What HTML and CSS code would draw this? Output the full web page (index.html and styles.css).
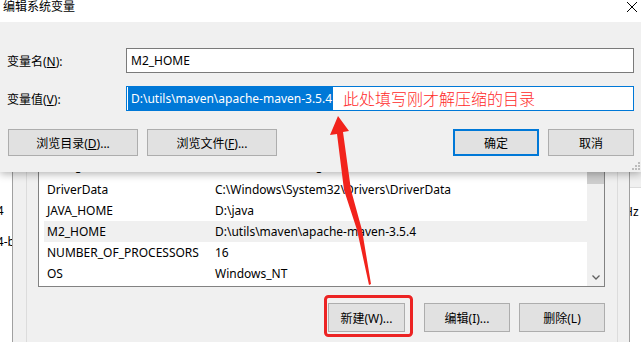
FILE: index.html
```html
<!DOCTYPE html>
<html>
<head>
    <title>编辑系统变量</title>
    <link rel="stylesheet" href="styles.css">
</head>
<body>
    <div class="desktop">
        <div class="envwin">
            <div class="edge-left">
                <div class="edge-line">64</div>
                <div class="edge-line">64-bit</div>
            </div>
            <div class="frame">
                <div class="inner">
                    <div class="varlist">
                        <div class="rows">
                            <div class="row peek"><span>configsetroot</span><span>C:\Windows\ConfigSetRoot</span></div>
                            <div class="row"><span>DriverData</span><span>C:\Windows\System32\Drivers\DriverData</span></div>
                            <div class="row"><span>JAVA_HOME</span><span>D:\java</span></div>
                            <div class="row hover"><span>M2_HOME</span><span>D:\utils\maven\apache-maven-3.5.4</span></div>
                            <div class="row"><span>NUMBER_OF_PROCESSORS</span><span>16</span></div>
                            <div class="row"><span>OS</span><span>Windows_NT</span></div>
                        </div>
                        <div class="scrollbar">
                            <div class="thumb"></div>
                            <div class="track"></div>
                            <div class="arrow-down">
                                <svg width="8" height="5" viewBox="0 0 8 5"><path d="M0.5 0.5 L4 4 L7.5 0.5" fill="none" stroke="#606060" stroke-width="1.3"/></svg>
                            </div>
                        </div>
                    </div>
                    <div class="list-buttons">
                        <button class="btn btn-new">新建(W)...</button>
                        <button class="btn btn-list">编辑(I)...</button>
                        <button class="btn btn-list">删除(L)</button>
                    </div>
                </div>
            </div>
            <div class="edge-right">
                <div class="edge-right-top"></div>
                <div class="edge-line hz">Hz</div>
            </div>
        </div>

        <div class="dialog">
            <div class="titlebar">
                <span class="title">编辑系统变量</span>
                <svg class="close" width="10" height="10" viewBox="0 0 10 10"><path d="M0 0 L10 10 M10 0 L0 10" stroke="#000" stroke-width="1"/></svg>
            </div>
            <div class="dialog-body">
                <div class="fields">
                    <label>变量名(<u>N</u>):</label>
                    <div class="field">M2_HOME</div>
                    <label>变量值(<u>V</u>):</label>
                    <div class="field focused"><span class="sel">D:\utils\maven\apache-maven-3.5.4</span><span class="note">此处填写刚才解压缩的目录</span></div>
                </div>
                <div class="dialog-buttons">
                    <button class="btn btn-wide">浏览目录(<u>D</u>)...</button>
                    <button class="btn btn-wide">浏览文件(<u>F</u>)...</button>
                    <button class="btn btn-ok">确定</button>
                    <button class="btn btn-cancel">取消</button>
                </div>
            </div>
            <svg class="grip" width="8" height="8" viewBox="0 0 8 8">
                <rect x="6" y="0" width="2" height="2" fill="#bcbcbc"/>
                <rect x="3" y="3" width="2" height="2" fill="#bcbcbc"/>
                <rect x="6" y="3" width="2" height="2" fill="#bcbcbc"/>
                <rect x="0" y="6" width="2" height="2" fill="#bcbcbc"/>
                <rect x="3" y="6" width="2" height="2" fill="#bcbcbc"/>
                <rect x="6" y="6" width="2" height="2" fill="#bcbcbc"/>
            </svg>
        </div>

        <!-- red annotation: arrow and box around the new button -->
        <svg class="marks" width="641" height="342" viewBox="0 0 641 342">
            <polygon points="338,116 349,131 343,132 351,190 362,230 371,284 369,285 357,230 344,190 337,134 330,135" fill="#f2231c"/>
            <rect x="325.5" y="296.5" width="86" height="39" rx="3" fill="none" stroke="#ec2424" stroke-width="3"/>
        </svg>
    </div>
</body>
</html>
```

FILE: styles.css
```css
body {
    margin: 0;
    font-family: "Noto Sans", "Noto Sans CJK SC", sans-serif;
    font-size: 12px;
    color: #000;
    background: #f0f0f0;
}

.desktop {
    position: relative;
    width: 641px;
    height: 342px;
    overflow: hidden;
}

/* window behind the dialog */
.envwin {
    display: flex;
    height: 342px;
}

.edge-left {
    width: 12px;
    flex: none;
    background: #fff;
    overflow: hidden;
    white-space: nowrap;
    padding-top: 203px;
}

.edge-line {
    line-height: 16px;
    margin-left: -10px;
}

.edge-line + .edge-line {
    margin-top: 15px;
}

.edge-right {
    width: 11px;
    flex: none;
    background: #fff;
    overflow: hidden;
    white-space: nowrap;
}

.edge-right-top {
    height: 187px;
    background: #f0f0f0;
    border-bottom: 1px solid #dcdcdc;
}

.edge-line.hz {
    margin: 16px 0 0 -6px;
}

.frame {
    flex: 1;
    border-left: 1px solid #a0a0a0;
    border-right: 1px solid #a0a0a0;
    padding: 0 11px 0 13px;
}

.inner {
    height: 100%;
    box-sizing: border-box;
    border-left: 1px solid #dcdcdc;
    border-right: 1px solid #dcdcdc;
    padding: 157px 12px 0 11px;
}

.varlist {
    display: flex;
    height: 130px;
    box-sizing: border-box;
    border: 1px solid #828282;
    background: #fff;
}

.rows {
    flex: 1;
    padding-left: 5px;
}

.row {
    display: grid;
    grid-template-columns: 168px 1fr;
    height: 21px;
    line-height: 21px;
    white-space: nowrap;
}

.row span {
    padding-left: 3px;
    overflow: hidden;
}

.row.peek {
    line-height: 16px;
}

.row.hover {
    background: #f0f0f0;
}

.scrollbar {
    width: 17px;
    display: flex;
    flex-direction: column;
    background: #f0f0f0;
}

.thumb {
    height: 26px;
    background: #cdcdcd;
}

.track {
    flex: 1;
}

.arrow-down {
    height: 17px;
    display: flex;
    align-items: center;
    justify-content: center;
}

.list-buttons {
    display: flex;
    justify-content: flex-end;
    margin-top: 16px;
}

.btn {
    height: 29px;
    box-sizing: border-box;
    border: 1px solid #adadad;
    background: #e1e1e1;
    font-family: inherit;
    font-size: 12px;
    color: #000;
    padding: 0;
}

.btn-new {
    width: 77px;
    margin-right: 19px;
}

.btn-list {
    width: 86px;
}

.btn-list + .btn-list {
    margin-left: 9px;
}

/* the edit dialog on top */
.dialog {
    position: absolute;
    top: 0;
    left: 0;
    width: 641px;
    height: 172px;
    background: #f0f0f0;
    box-shadow: 0 2px 8px rgba(0, 0, 0, 0.3);
}

.titlebar {
    height: 22px;
    background: #fff;
    display: flex;
    justify-content: space-between;
    padding-left: 3px;
    line-height: 14px;
}

.close {
    margin: 2px 4px 0 0;
}

.dialog-body {
    padding: 26px 7px 0 7px;
}

.fields {
    display: grid;
    grid-template-columns: 119px 1fr;
    row-gap: 13px;
    align-items: center;
}

.field {
    height: 25px;
    box-sizing: border-box;
    border: 1px solid #7a7a7a;
    background: #fff;
    display: flex;
    align-items: center;
    padding-left: 4px;
    white-space: nowrap;
}

.field.focused {
    border-color: #0078d7;
    padding-left: 1px;
}

.sel {
    background: #0078d7;
    color: #fff;
    line-height: 23px;
    padding: 0 1px 0 3px;
}

.note {
    color: #ff2a2a;
    font-size: 16px;
    font-weight: 300;
    line-height: 20px;
    margin-left: 10px;
}

.dialog-buttons {
    display: flex;
    margin-top: 18px;
    padding-left: 1px;
}

.dialog-buttons .btn {
    height: 27px;
}

.btn-wide {
    width: 130px;
}

.btn-wide + .btn-wide {
    margin-left: 9px;
}

.btn-ok {
    width: 86px;
    margin-left: auto;
    border: 2px solid #0078d7;
}

.btn-cancel {
    width: 86px;
    margin-left: 9px;
}

.grip {
    position: absolute;
    right: 1px;
    bottom: 2px;
}

.marks {
    position: absolute;
    top: 0;
    left: 0;
    pointer-events: none;
}
```
